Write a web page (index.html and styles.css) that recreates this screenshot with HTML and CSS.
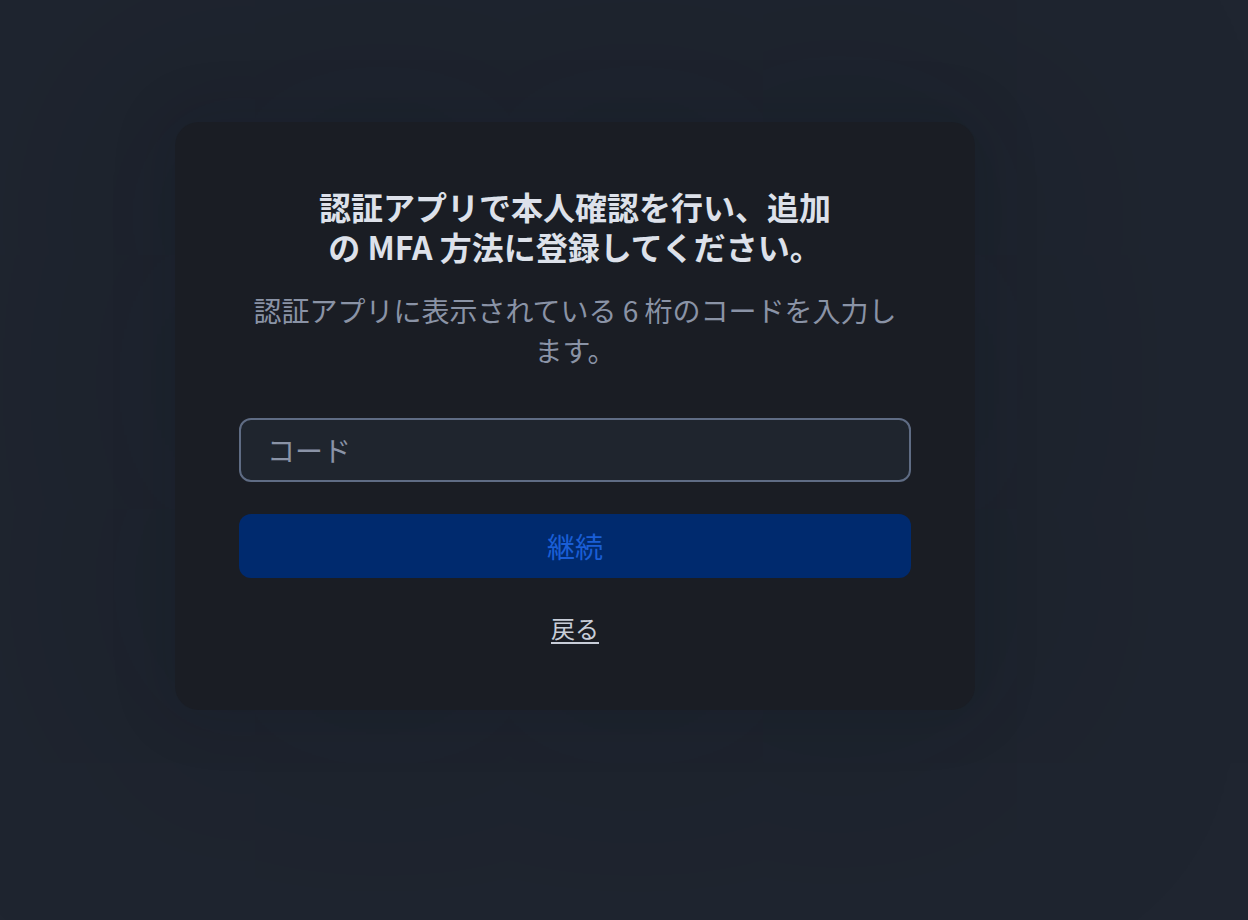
FILE: index.html
```html
<!DOCTYPE html>
<html lang="ja">
<head>
<meta charset="utf-8">
<title>MFA</title>
<link rel="stylesheet" href="styles.css">
</head>
<body>
<main class="page">
  <section class="card">
    <h1 class="title">認証アプリで本人確認を行い、追加の MFA 方法に登録してください。</h1>
    <p class="subtitle">認証アプリに表示されている 6 桁のコードを入力します。</p>
    <form class="form">
      <input class="input" type="text" placeholder="コード">
      <button class="button" type="button" disabled>継続</button>
      <a class="back" href="#">戻る</a>
    </form>
  </section>
</main>
</body>
</html>
```

FILE: styles.css
```css
* { box-sizing: border-box; }
html, body {
  margin: 0;
  height: 100%;
}
body {
  background: #1f2530;
  font-family: "Noto Sans CJK JP", "Noto Sans", sans-serif;
  overflow: hidden;
}
.page {
  display: flex;
  align-items: flex-start;
  padding: 122px 0 0 175px;
  height: 100%;
}
.card {
  width: 800px;
  background: #1a1d24;
  border-radius: 24px;
  padding: 64px 64px 64px;
  display: flex;
  flex-direction: column;
  align-items: center;
  box-shadow: 0 0 60px 10px rgba(12, 14, 18, 0.10), 0 0 260px 80px rgba(12, 14, 18, 0.12);
}
.title {
  margin: 0;
  max-width: 520px;
  text-align: center;
  font-size: 32px;
  line-height: 40px;
  font-weight: 700;
  color: #dde1ea;
}
.subtitle {
  margin: 24px 0 0;
  width: 652px;
  text-align: center;
  font-size: 28px;
  line-height: 40px;
  color: #8a93a6;
}
.form {
  margin-top: 48px;
  width: 672px;
  display: flex;
  flex-direction: column;
  align-items: center;
}
.input {
  width: 100%;
  height: 64px;
  border: 2px solid #5f6c84;
  border-radius: 12px;
  background: #1f252e;
  padding: 0 26px;
  font-family: inherit;
  font-size: 28px;
  color: #dde1ea;
  outline: none;
}
.input::placeholder {
  color: #8a93a6;
}
.button {
  margin-top: 32px;
  width: 100%;
  height: 64px;
  border: none;
  border-radius: 12px;
  background: #002a6e;
  color: #1a5ed6;
  font-family: inherit;
  font-size: 28px;
  cursor: default;
}
.back {
  margin-top: 32px;
  font-size: 24px;
  line-height: 36px;
  color: #c8cdd8;
  text-decoration: underline;
  text-underline-offset: 4px;
}
```
